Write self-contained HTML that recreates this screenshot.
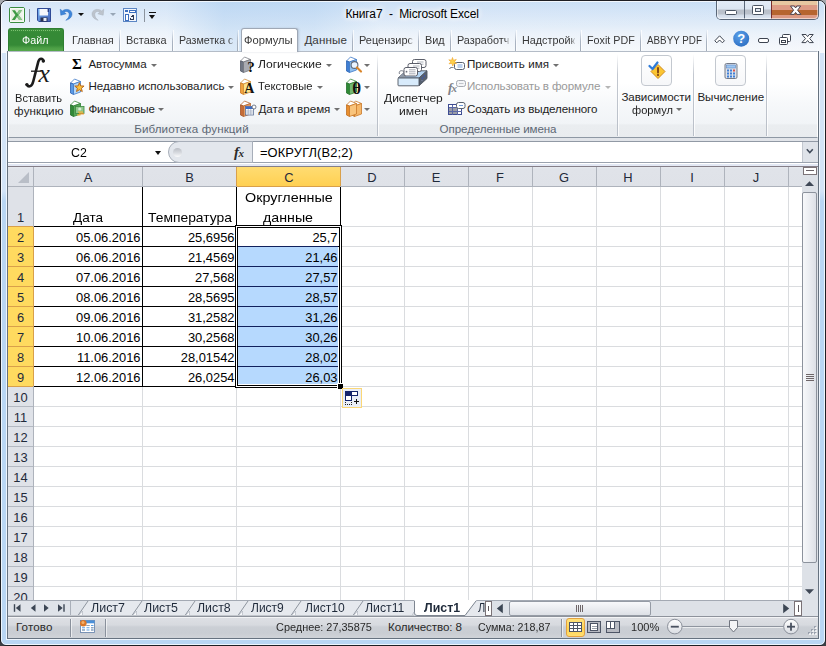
<!DOCTYPE html>
<html><head><meta charset="utf-8"><title>Excel</title>
<style>
html,body{margin:0;padding:0;}
body{width:826px;height:646px;overflow:hidden;background:linear-gradient(#a6a9ae,#3c3e43);font-family:"Liberation Sans",sans-serif;position:relative;}
.t{position:absolute;height:16px;line-height:16px;white-space:pre;font-family:"Liberation Sans",sans-serif;}
.a{position:absolute;}
#win{position:absolute;left:0;top:0;width:826px;height:646px;box-sizing:border-box;border:1px solid #1e1f24;border-radius:7px 7px 6px 6px;background:linear-gradient(#d3e4f7 0,#d3e4f7 190px,#b9d6f3 200px,#b9d6f3 100%);overflow:hidden;}
#glass{position:absolute;left:0;top:0;width:824px;height:52px;background:linear-gradient(90deg,rgba(255,255,255,.25) 0,rgba(255,255,255,.2) 20%,rgba(170,205,240,.35) 27%,rgba(170,205,240,.3) 38%,rgba(255,255,255,.1) 46%,rgba(255,255,255,.05) 100%),linear-gradient(#c6ddf5 0,#cfe2f6 8px,#d7e6f7 16px,#dfebf8 24px,#e9f1fa 32px,#f1f5fb 42px,#f6f9fc 52px);}
#glassline{position:absolute;left:0;top:0;width:824px;height:644px;box-sizing:border-box;border:1px solid rgba(255,255,255,.75);border-radius:6px 6px 5px 5px;}
.sep{position:absolute;width:1px;top:30px;height:21px;background:linear-gradient(rgba(150,165,185,0),#aab4c2 55%,#a3adbb);box-shadow:1px 0 0 rgba(255,255,255,.7);}
#ribbon{position:absolute;left:8px;top:51px;width:810px;height:87px;box-sizing:border-box;border:1px solid #fff;border-top-color:#b4bcc7;border-bottom:1px solid #8e98a4;background:linear-gradient(#ffffff 0,#ffffff 36%,#f6f8fa 62%,#f1f4f7 84%,#eaedf0 86%,#e9ecef 100%);}
.gsep{position:absolute;width:1px;top:54px;height:82px;background:linear-gradient(rgba(180,186,195,0),#c3c8d0 25%,#b9bfc8);box-shadow:1px 0 0 rgba(255,255,255,.8);}
.glabel{position:absolute;top:123px;height:13px;background:rgba(205,211,220,0);}
.arr{position:absolute;width:0;height:0;border-left:3px solid transparent;border-right:3px solid transparent;border-top:3px solid #707070;}
.bigbtn{position:absolute;width:31px;height:31px;box-sizing:border-box;border:1px solid #c3c8cf;border-radius:4px;background:linear-gradient(#fff,#f6f7f9);}

</style></head><body>
<div id="win">
<div id="glass"></div>
<div id="glassline"></div>
</div>
<!-- ===== window caption buttons ===== -->
<div class="a" style="left:716px;top:1px;width:103px;height:19px;box-sizing:border-box;border:1px solid #5a6778;border-top:none;border-radius:0 0 5px 5px;overflow:hidden;background:#dbe6f3">
  <div class="a" style="left:0;top:0;width:27px;height:19px;background:linear-gradient(#e3ecf7 0,#dbe5f1 8px,#b9c0ca 9px,#bcc3cd 13px,#d3dce8 14px,#dde6f2 18px)"></div>
  <div class="a" style="left:28px;top:0;width:26px;height:19px;background:linear-gradient(#e3ecf7 0,#dbe5f1 8px,#b9c0ca 9px,#bcc3cd 13px,#d3dce8 14px,#dde6f2 18px)"></div>
  <div class="a" style="left:27px;top:0;width:1px;height:19px;background:#5a6778"></div>
  <div class="a" style="left:54px;top:0;width:1px;height:19px;background:#7a2e2a"></div>
  <div class="a" style="left:55px;top:0;width:47px;height:19px;background:linear-gradient(#e7c7a1 0,#e7c7a1 4px,#dd9b85 4px,#dd9b85 9px,#b6652f 9px,#b6652f 14px,#dc9a84 14px,#dc9a84 18px)"></div>
  <div class="a" style="left:0;top:0;width:101px;height:18px;box-sizing:border-box;border:1px solid rgba(255,255,255,.55);border-top:none;border-radius:0 0 4px 4px"></div>
</div>
<svg class="a" style="left:716px;top:0" width="103" height="20">
  <rect x="9.5" y="10.5" width="11" height="4" rx="1" fill="#fff" stroke="#4b5563"/>
  <rect x="36.500" y="5.500" width="11" height="9" rx="1" fill="#fff" stroke="#4b5563"/>
  <rect x="39.5" y="8.5" width="5" height="3" fill="#dfe6ef" stroke="#4b5563"/>
  <path d="M74.500 6 L78.300 6 L79.600 8 L80.900 6 L84.700 6 L81.600 10.200 L84.900 14.400 L81 14.400 L79.600 12.400 L78.200 14.400 L74.300 14.400 L77.600 10.200 Z" fill="#fff" stroke="#4d4550" stroke-width="1" stroke-linejoin="round"/>
</svg>
<!-- ===== quick access toolbar ===== -->
<svg class="a" style="left:9px;top:7px" width="16" height="16">
  <rect x="0.500" y="0.500" width="15" height="15" rx="1.500" fill="#e9f0e3" stroke="#3a8d3f"/>
  <rect x="1.500" y="1.500" width="13" height="13" fill="none" stroke="#f7faf4"/>
  <path d="M3 3.200 L6 3.200 L8 6.300 L10 3.200 L13 3.200 L9.600 8 L13.200 12.900 L10.100 12.900 L8 9.800 L5.900 12.900 L2.800 12.900 L6.400 8 Z" fill="#3f9a45"/>
  <path d="M10 3.200 L13 3.200 L9.600 8 L8 6.300 Z M8 9.800 L9.600 8 L13.200 12.900 L10.100 12.900 Z" fill="#8cc68a"/>
  <path d="M11 7 L14 4.500 V11.500 Z" fill="#f4f8f1" opacity=".8"/>
</svg>
<div class="a" style="left:29px;top:9px;width:1px;height:13px;background:#8b939d"></div>
<svg class="a" style="left:37px;top:8px" width="14" height="14">
  <defs><linearGradient id="sv" x1="0" y1="0" x2="1" y2="1"><stop offset="0" stop-color="#78b8f6"/><stop offset="1" stop-color="#4560b4"/></linearGradient></defs>
  <path d="M0.500 0.500 H13.500 V13.500 H1.800 L0.500 12.200 Z" fill="url(#sv)" stroke="#2f4a96"/>
  <rect x="2.500" y="1" width="8.500" height="6.500" fill="#f6f8fb"/>
  <rect x="10.600" y="1" width="1.400" height="3" fill="#2d3f86"/>
  <rect x="3.500" y="9.500" width="7" height="4" fill="#2a3350"/>
  <rect x="6.500" y="10" width="3" height="3" fill="#e9edf5"/>
</svg>
<svg class="a" style="left:59px;top:7px" width="15" height="15">
  <path d="M1.200 2.200 L1.800 8.200 L7.200 6.800 L5 5.300 C7.200 3.600 10.200 4.600 10.200 7.600 C10.200 9.900 8.900 11.600 6.800 13.300 C10.600 12.300 13 10 13 7 C13 2.600 7.200 0.900 3.400 3.900 Z" fill="#3f86d9" stroke="#2f6fc0" stroke-width=".5"/>
</svg>
<div class="a" style="left:78px;top:13px;width:0;height:0;border-left:3px solid transparent;border-right:3px solid transparent;border-top:3px solid #111"></div>
<svg class="a" style="left:90px;top:8px" width="15" height="15">
  <path d="M13.800 1.200 L13.200 7.200 L7.800 5.800 L10 4.300 C7.800 2.600 4.800 3.600 4.800 6.600 C4.800 8.900 6.100 10.600 8.200 12.300 C4.400 11.300 2 9 2 6 C2 1.600 7.800 -0.100 11.600 2.900 Z" fill="#bcc3cc" stroke="#aab2bd" stroke-width=".5"/>
</svg>
<div class="a" style="left:110px;top:13px;width:0;height:0;border-left:3px solid transparent;border-right:3px solid transparent;border-top:3px solid #98a6b6"></div>
<svg class="a" style="left:123px;top:8px" width="14" height="14" shape-rendering="crispEdges">
  <rect x="0.500" y="0.500" width="13" height="13" fill="#f3f6fb" stroke="#5b86c4"/>
  <rect x="2" y="2" width="3" height="2" fill="#3c6fc0"/><rect x="6" y="2" width="6" height="2" fill="#fff" stroke="#3c6fc0" stroke-width="1"/>
  <rect x="2" y="6" width="3" height="6" fill="#fff" stroke="#3c6fc0" stroke-width="1"/>
  <path d="M7 11 H10 V7" fill="none" stroke="#2f3c58" stroke-width="1"/><path d="M8.500 8.500 L10 6 L11.500 8.500 Z M8 9.500 L6 11 L8 12.500Z" fill="#2f3c58"/>
</svg>
<div class="a" style="left:144px;top:9px;width:1px;height:13px;background:#8b939d"></div>
<div class="a" style="left:149px;top:12px;width:7px;height:1px;background:#111"></div>
<div class="a" style="left:149px;top:15px;width:0;height:0;border-left:3.500px solid transparent;border-right:3.500px solid transparent;border-top:4px solid #111"></div>

<!-- ===== tab row ===== -->
<div class="a" style="left:8px;top:28px;width:56px;height:23px;background:linear-gradient(#3c903c 0,#358a36 4px,#358a36 16px,#4c9f45 19px,#5aaa4e 23px);border:1px solid #2f7f31;border-bottom:none;box-sizing:border-box;border-radius:3px 3px 0 0"></div><div class="a" style="left:11px;top:30px;width:50px;height:1px;background:repeating-linear-gradient(90deg,#7cc070 0,#7cc070 1px,rgba(0,0,0,0) 1px,rgba(0,0,0,0) 2px)"></div>
<div class="sep" style="left:119px"></div><div class="sep" style="left:172px"></div><div class="sep" style="left:237px"></div>
<div class="sep" style="left:352px"></div><div class="sep" style="left:418px"></div><div class="sep" style="left:450px"></div>
<div class="sep" style="left:515px"></div><div class="sep" style="left:580px"></div><div class="sep" style="left:640px"></div><div class="sep" style="left:706px"></div>
<div id="ribbon"></div>
<!-- active tab -->
<div class="a" style="left:241px;top:28px;width:57px;height:24px;box-sizing:border-box;border:1px solid #9fa8b5;border-bottom:none;border-radius:3px 3px 0 0;background:#fff;box-shadow:1px 0 2px rgba(120,135,155,.35)"></div>
<!-- ribbon right-side controls -->
<svg class="a" style="left:712px;top:30px" width="106" height="20">
  <path d="M2.800 10.800 L7.600 5.800 L12.400 10.800 L10.400 12.800 L7.600 10 L4.800 12.800 Z" fill="#fff" stroke="#3d4450" stroke-width="1" stroke-linejoin="round"/>
  <defs><radialGradient id="hp" cx=".4" cy=".3" r=".8"><stop offset="0" stop-color="#5aa0ea"/><stop offset="1" stop-color="#2b6cc0"/></radialGradient></defs>
  <circle cx="29.200" cy="8.700" r="8" fill="url(#hp)"/>
  <text x="29.300" y="13.300" font-family="Liberation Sans" font-weight="bold" font-size="13" fill="#fff" text-anchor="middle">?</text>
  <rect x="46.500" y="8.500" width="10" height="4" rx="1.500" fill="#fff" stroke="#3d4450"/>
  <rect x="70.500" y="4.500" width="8" height="7" rx="1" fill="#fff" stroke="#3d4450"/>
  <rect x="67.500" y="7.500" width="8" height="7" rx="1" fill="#fff" stroke="#3d4450"/>
  <rect x="69.500" y="10.500" width="4" height="2" fill="#fff" stroke="#3d4450"/>
  <path d="M90 4.500 L94 4.500 L95.600 6.600 L97.200 4.500 L101.200 4.500 L97.700 8.600 L101.300 12.600 L97.300 12.600 L95.600 10.500 L93.900 12.600 L89.900 12.600 L93.500 8.600 Z" fill="#fff" stroke="#3d4450" stroke-width="1" stroke-linejoin="round"/>
</svg>
<!-- group label bands -->
<div class="glabel" style="left:10px;width:366px"></div><div class="glabel" style="left:379px;width:238px"></div><div class="glabel" style="left:620px;width:72px"></div><div class="glabel" style="left:695px;width:70px"></div><div class="glabel" style="left:768px;width:48px"></div>
<div class="gsep" style="left:377px"></div><div class="gsep" style="left:617px"></div><div class="gsep" style="left:693px"></div><div class="gsep" style="left:766px"></div>
<div class="bigbtn" style="left:641px;top:55px"></div><div class="bigbtn" style="left:715px;top:55px"></div>
<!-- big fx -->
<svg class="a" style="left:22px;top:54px" width="30" height="36">
  <path d="M21.400 7 C21 4.300 17.600 3.400 16.300 7.600 L11.300 27.300 C10 32.700 6.600 33.700 4.900 30.800" fill="none" stroke="#1c1c1c" stroke-width="2.600" stroke-linecap="round"/>
  <circle cx="21.300" cy="7" r="1.700" fill="#1c1c1c"/><circle cx="4.900" cy="30.600" r="1.700" fill="#1c1c1c"/>
  <path d="M9 17.200 H19.500" stroke="#1c1c1c" stroke-width="1.300"/>
</svg>
<div class="t" style="left:38.400px;top:54px;height:40px;line-height:40px;font-family:'Liberation Serif';font-style:italic;font-size:25.500px;color:#1c1c1c;">x</div>
<!-- sigma -->
<div class="t" style="left:72px;top:56px;font-family:'Liberation Serif';font-weight:bold;font-size:15px;color:#000">Σ</div>
<!-- recently used: blue book + star -->
<svg class="a" style="left:69px;top:78px" width="18" height="18">
  <path d="M1.500 5 L5.500 1 L11.500 3.500 L4.500 6 Z" fill="#fff" stroke="#3d78c8" stroke-width=".8"/>
  <path d="M1.500 5 L4.500 6 L4.500 16.500 L1.500 15 Z" fill="#5b9be6" stroke="#2f5fb0" stroke-width=".8"/>
  <path d="M4.500 6 L11.500 3.500 L11.500 14 L4.500 16.500 Z" fill="#b5d8f8" stroke="#3d78c8" stroke-width=".8"/>
  <path d="M10.40 4.70 L11.63 7.90 L15.06 8.09 L12.40 10.25 L13.28 13.56 L10.40 11.70 L7.52 13.56 L8.40 10.25 L5.74 8.09 L9.17 7.90 Z" fill="#fbc23c" stroke="#b9691c" stroke-width="1"/>
</svg>
<!-- financial: green book + coins -->
<svg class="a" style="left:69px;top:100px" width="18" height="18">
  <path d="M1.500 5 L5.500 1 L11.500 3.500 L4.500 6 Z" fill="#fff" stroke="#3b8a3f" stroke-width=".8"/>
  <path d="M1.500 5 L4.500 6 L4.500 16.500 L1.500 15 Z" fill="#2f8a36" stroke="#256f2b" stroke-width=".8"/>
  <path d="M4.500 6 L11.500 3.500 L11.500 14 L4.500 16.500 Z" fill="#58a85a" stroke="#2f7f35" stroke-width=".8"/>
  <rect x="6.500" y="6.500" width="8.500" height="7" fill="#8fc68c" stroke="#3b8a3f" stroke-width=".8"/>
  <circle cx="10.800" cy="9" r="1.600" fill="#d9ecd3"/>
  <rect x="9" y="11.500" width="5" height="1.200" fill="#f4b63a"/><rect x="10" y="13.200" width="5" height="1.200" fill="#e9952a"/><rect x="8" y="14.300" width="3.500" height="1.200" fill="#f4b63a"/>
</svg>
<!-- logical: grey book + ? -->
<svg class="a" style="left:239px;top:56px" width="18" height="18">
  <path d="M1.500 5 L5.500 1 L11.500 3.500 L4.500 6 Z" fill="#fff" stroke="#7d8088" stroke-width=".8"/>
  <path d="M1.500 5 L4.500 6 L4.500 16.500 L1.500 15 Z" fill="#6f7684" stroke="#555b68" stroke-width=".8"/>
  <path d="M4.500 6 L11.500 3.500 L11.500 14 L4.500 16.500 Z" fill="#a9abb2" stroke="#73767e" stroke-width=".8"/>
  <text x="12" y="15.800" font-family="Liberation Serif" font-weight="bold" font-size="15" text-anchor="middle" fill="#111">?</text>
</svg>
<!-- text: yellow book + A -->
<svg class="a" style="left:239px;top:78px" width="18" height="18">
  <path d="M1.500 5 L5.500 1 L11.500 3.500 L4.500 6 Z" fill="#fff" stroke="#cf8a35" stroke-width=".8"/>
  <path d="M1.500 5 L4.500 6 L4.500 16.500 L1.500 15 Z" fill="#f0a23c" stroke="#c9792a" stroke-width=".8"/>
  <path d="M4.500 6 L11.500 3.500 L11.500 14 L4.500 16.500 Z" fill="#fde28a" stroke="#d08c36" stroke-width=".8"/>
  <text x="10.200" y="15.400" font-family="Liberation Serif" font-weight="bold" font-size="14" text-anchor="middle" fill="#111">A</text>
</svg>
<!-- date: orange book + calendar -->
<svg class="a" style="left:239px;top:100px" width="18" height="18">
  <path d="M1.500 5 L5.500 1 L11.500 3.500 L4.500 6 Z" fill="#fff" stroke="#b86a35" stroke-width=".8"/>
  <path d="M1.500 5 L4.500 6 L4.500 16.500 L1.500 15 Z" fill="#c86c36" stroke="#a3552a" stroke-width=".8"/>
  <path d="M4.500 6 L11.500 3.500 L11.500 14 L4.500 16.500 Z" fill="#e49a63" stroke="#b86a35" stroke-width=".8"/>
  <rect x="6.500" y="6.500" width="8" height="8.500" fill="#fff" stroke="#5b6f95" stroke-width=".8"/>
  <rect x="6.500" y="6.500" width="8" height="2.500" fill="#3c6cc4"/>
  <path d="M6.500 11 H14.500 M6.500 13 H14.500 M9.200 9 V15 M11.800 9 V15" stroke="#9aa6bd" stroke-width=".7"/>
  <circle cx="15" cy="7" r="2" fill="#fff" stroke="#555e70" stroke-width=".8"/>
</svg>
<!-- lookup: blue book + magnifier -->
<svg class="a" style="left:345px;top:56px" width="18" height="18">
  <path d="M1.500 5 L5.500 1 L11.500 3.500 L4.500 6 Z" fill="#fff" stroke="#3d78c8" stroke-width=".8"/>
  <path d="M1.500 5 L4.500 6 L4.500 16.500 L1.500 15 Z" fill="#3f7fd4" stroke="#2f66b4" stroke-width=".8"/>
  <path d="M4.500 6 L11.500 3.500 L11.500 14 L4.500 16.500 Z" fill="#8fc0f0" stroke="#3d78c8" stroke-width=".8"/>
  <circle cx="9.500" cy="9" r="3.400" fill="#eaf4ff" stroke="#5f6b7d" stroke-width="1.100"/>
  <path d="M12 11.500 L16 15.500" stroke="#d9862b" stroke-width="2.200" stroke-linecap="round"/>
</svg>
<!-- math: green book + theta -->
<svg class="a" style="left:345px;top:78px" width="18" height="18">
  <path d="M1.500 5 L5.500 1 L11.500 3.500 L4.500 6 Z" fill="#fff" stroke="#3b8a3f" stroke-width=".8"/>
  <path d="M1.500 5 L4.500 6 L4.500 16.500 L1.500 15 Z" fill="#2f8a36" stroke="#256f2b" stroke-width=".8"/>
  <path d="M4.500 6 L11.500 3.500 L11.500 14 L4.500 16.500 Z" fill="#74b874" stroke="#2f7f35" stroke-width=".8"/>
  <text x="11.800" y="15.800" font-family="Liberation Serif" font-weight="bold" font-size="17" text-anchor="middle" fill="#111">θ</text>
</svg>
<!-- more: two orange books -->
<svg class="a" style="left:345px;top:100px" width="19" height="18">
  <g transform="translate(5,0)"><path d="M1.500 5 L5.500 1 L11.500 3.500 L4.500 6 Z" fill="#fff" stroke="#c9792a" stroke-width=".8"/>
  <path d="M1.500 5 L4.500 6 L4.500 16.500 L1.500 15 Z" fill="#e98f2f" stroke="#bf6f22" stroke-width=".8"/>
  <path d="M4.500 6 L11.500 3.500 L11.500 14 L4.500 16.500 Z" fill="#f6b86a" stroke="#c9792a" stroke-width=".8"/></g>
  <g><path d="M1.500 5 L5.500 1 L11.500 3.500 L4.500 6 Z" fill="#fff" stroke="#c9792a" stroke-width=".8"/>
  <path d="M1.500 5 L4.500 6 L4.500 16.500 L1.500 15 Z" fill="#e98f2f" stroke="#bf6f22" stroke-width=".8"/>
  <path d="M4.500 6 L11.500 3.500 L11.500 14 L4.500 16.500 Z" fill="#f9c47c" stroke="#c9792a" stroke-width=".8"/></g>
</svg>
<!-- name manager -->
<svg class="a" style="left:396px;top:57px" width="34" height="32">
  <path d="M10 13.800 L31 13.800 L23 21 L2 21 Z" fill="#b4d4f2" stroke="#4f5560" stroke-width=".9"/>
  <path d="M10 13.800 L13 13.800 L9 21 L2 21 Z" fill="#8e98a6"/>
  <rect x="16.500" y="2.500" width="13.500" height="8" rx="2" fill="#fff" stroke="#5c5f6a"/>
  <path d="M21 5 H27.500 M21 7.200 H27.500" stroke="#a4a9b3" stroke-width=".9"/>
  <rect x="12" y="6.500" width="13.500" height="8" rx="2" fill="#fff" stroke="#5c5f6a"/>
  <path d="M17 9 H23.500 M17 11.200 H23.500" stroke="#a4a9b3" stroke-width=".9"/>
  <rect x="8" y="10.500" width="13.500" height="8.500" rx="2" fill="#fff" stroke="#5c5f6a"/>
  <path d="M13 12.800 H19.500 M13 14.800 H19.500 M13 16.800 H19.500" stroke="#9da2ad" stroke-width=".9"/>
  <circle cx="10.500" cy="14.700" r=".9" fill="#6a6e7a"/>
  <path d="M8 14.500 C4.500 12.500 2.500 14.500 3.500 17" fill="none" stroke="#6a6e7a" stroke-width=".9"/>
  <path d="M23 21 L31 13.800 L31 21.500 L23 28.800 Z" fill="#556070" stroke="#4f5560" stroke-width=".9"/>
  <circle cx="26.500" cy="21" r=".7" fill="#3a4fc0"/><circle cx="28.500" cy="19" r=".7" fill="#3a4fc0"/><circle cx="26" cy="23.500" r=".6" fill="#8a8fb0"/>
  <rect x="2" y="21" width="21" height="7.800" rx=".8" fill="#d8ebfb" stroke="#4f5560" stroke-width=".9"/>
</svg>
<!-- define name -->
<svg class="a" style="left:448px;top:57px" width="18" height="16">
  <path d="M1.500 12 C2 10 4 10.500 5.500 10.500" fill="none" stroke="#59616f" stroke-width=".9"/>
  <rect x="6.500" y="5.500" width="10" height="7" rx="2" fill="#fff" stroke="#59616f"/>
  <path d="M9.500 8 H14.500 M9.500 10 H14.500" stroke="#6d9ad8" stroke-width=".9"/>
  <path d="M4.500 0.500 L5.400 3.300 L8.300 2.400 L6.500 4.700 L8.500 6.500 L5.700 6.400 L4.800 9 L3.800 6.400 L1 6.800 L2.800 4.800 L0.800 2.800 L3.600 3.200 Z" fill="#fdd24c" stroke="#f0a326" stroke-width=".6"/>
</svg>
<!-- use in formula (disabled) -->
<div class="t" style="left:448px;top:80px;font-family:'Liberation Serif';font-style:italic;font-weight:bold;font-size:13.500px;color:#808389;letter-spacing:-1px">f<span style="font-size:11px">x</span></div>
<svg class="a" style="left:455px;top:80px" width="11" height="8"><rect x="1.500" y="0.500" width="9" height="6" rx="2" fill="#f4f5f7" stroke="#a5a9b0"/><path d="M4 3.500 H8.500" stroke="#c2c5cb"/></svg>
<!-- create from selection -->
<svg class="a" style="left:447px;top:102px" width="19" height="14" shape-rendering="crispEdges">
  <rect x="1.500" y="2.500" width="13" height="10" fill="#fff" stroke="#3d4c92"/>
  <rect x="2" y="6" width="8" height="6" fill="#9a9da6"/>
  <path d="M1.500 5.500 H14.500 M1.500 9.500 H14.500 M5.500 2.500 V12.500 M10.500 2.500 V12.500" stroke="#5a68a6" fill="none"/>
  <g shape-rendering="auto"><rect x="9.500" y="0.500" width="8.500" height="6" rx="2" fill="#fff" stroke="#59616f"/><path d="M12 3.500 H16" stroke="#6d9ad8"/></g>
</svg>
<!-- formula auditing: diamond + check -->
<svg class="a" style="left:647px;top:61px" width="20" height="20">
  <path d="M11 3.500 L18 10.500 L11 17.500 L4 10.500 Z" fill="#fbc531" stroke="#d08a1d" stroke-width="1"/>
  <path d="M11 7 V11.500" stroke="#7a3b12" stroke-width="1.800" stroke-linecap="round"/><circle cx="11" cy="14" r="1.100" fill="#7a3b12"/>
  <path d="M2.500 5 L5.500 8 L10.500 1.500" fill="none" stroke="#2f7bd8" stroke-width="2.200" stroke-linecap="round" stroke-linejoin="round"/>
</svg>
<!-- calculator -->
<svg class="a" style="left:724px;top:62px" width="14" height="18">
  <rect x="1" y="1.500" width="12" height="15" rx="1.500" fill="#dfe3ea" stroke="#737b8a"/>
  <rect x="2.500" y="3" width="9" height="3" fill="#9cc6f2" stroke="#5f86c2" stroke-width=".6"/>
  <g fill="#3f7fd6"><rect x="3" y="7.500" width="2" height="2"/><rect x="6" y="7.500" width="2" height="2"/><rect x="3" y="10.500" width="2" height="2"/><rect x="6" y="10.500" width="2" height="2"/><rect x="3" y="13.500" width="2" height="2"/><rect x="6" y="13.500" width="2" height="2"/><rect x="9" y="10.500" width="2" height="2"/><rect x="9" y="13.500" width="2" height="2"/></g>
  <rect x="9" y="7.500" width="2" height="2" fill="#d9534a"/>
</svg>

<!-- dropdown arrows -->
<div class="arr" style="left:151px;top:64px"></div><div class="arr" style="left:228px;top:86px"></div><div class="arr" style="left:158px;top:108px"></div>
<div class="arr" style="left:326px;top:64px"></div><div class="arr" style="left:317px;top:86px"></div><div class="arr" style="left:334px;top:108px"></div>
<div class="arr" style="left:364px;top:64px"></div><div class="arr" style="left:364px;top:86px"></div><div class="arr" style="left:364px;top:108px"></div>
<div class="arr" style="left:553px;top:64px"></div><div class="arr" style="left:605px;top:86px;border-top-color:#b5b5b5"></div>
<div class="arr" style="left:676px;top:108px"></div><div class="arr" style="left:728px;top:108px"></div>
<!-- ===== formula bar ===== -->
<div class="a" style="left:8px;top:138px;width:810px;height:28px;background:#e1e4e9"></div>
<div class="a" style="left:8px;top:141px;width:810px;height:22px;box-sizing:border-box;border-top:1px solid #9199a5;border-bottom:1px solid #9aa2ae;background:#fff"></div>
<div class="a" style="left:8px;top:163px;width:810px;height:1px;background:#fff"></div><div class="a" style="left:8px;top:164px;width:810px;height:2px;background:#e3e8f4"></div>
<div class="a" style="left:168px;top:141px;width:85px;height:22px;box-sizing:border-box;border:1px solid #a7aeb9;border-radius:11px 0 0 11px;background:#e3e7ed"></div>
<div class="a" style="left:173px;top:148px;width:9px;height:9px;border-radius:5px;background:linear-gradient(#b9bdc4,#d9dce1 55%,#fafbfc)"></div>
<div class="a" style="left:155px;top:151px;width:0;height:0;border-left:3.500px solid transparent;border-right:3.500px solid transparent;border-top:4px solid #111"></div>
<div class="t" style="left:234px;top:144px;font-family:'Liberation Serif';font-style:italic;font-weight:bold;font-size:15px;color:#2b2b2b;letter-spacing:-0.500px">f<span style="font-size:11px">x</span></div>
<div class="a" style="left:802px;top:142px;width:16px;height:20px;background:#dfe3e9;border-left:1px solid #c2c7cf;box-sizing:border-box"></div>
<svg class="a" style="left:802px;top:142px" width="16" height="20"><path d="M4.800 7.300 L7.800 10.500 L10.800 7.300" fill="none" stroke="#414b5a" stroke-width="1.600"/></svg>
<div id="grid" style="position:absolute;left:0;top:0;width:826px;height:600px;overflow:hidden"><div style="position:absolute;left:8px;top:166px;width:794px;height:434px;background:#fff;"></div>
<div style="position:absolute;left:8px;top:166px;width:794px;height:1px;background:#857f88;"></div>
<div style="position:absolute;left:8px;top:167px;width:794px;height:19px;background:linear-gradient(#e6e9ee 0,#e0e3e9 2px,#dfe2e8 100%);"></div>
<div style="position:absolute;left:8px;top:187px;width:25px;height:413px;background:#dfe2e8;"></div>
<div style="position:absolute;left:237px;top:167px;width:103px;height:19px;background:linear-gradient(#ffdc72,#ffd052);"></div>
<div style="position:absolute;left:8px;top:227px;width:25px;height:159px;background:#ffda5f;"></div>
<div style="position:absolute;left:142px;top:187px;width:1px;height:413px;background:#dadcdf;"></div>
<div style="position:absolute;left:236px;top:187px;width:1px;height:413px;background:#dadcdf;"></div>
<div style="position:absolute;left:340px;top:187px;width:1px;height:413px;background:#dadcdf;"></div>
<div style="position:absolute;left:404px;top:187px;width:1px;height:413px;background:#dadcdf;"></div>
<div style="position:absolute;left:468px;top:187px;width:1px;height:413px;background:#dadcdf;"></div>
<div style="position:absolute;left:532px;top:187px;width:1px;height:413px;background:#dadcdf;"></div>
<div style="position:absolute;left:596px;top:187px;width:1px;height:413px;background:#dadcdf;"></div>
<div style="position:absolute;left:660px;top:187px;width:1px;height:413px;background:#dadcdf;"></div>
<div style="position:absolute;left:724px;top:187px;width:1px;height:413px;background:#dadcdf;"></div>
<div style="position:absolute;left:788px;top:187px;width:1px;height:413px;background:#dadcdf;"></div>
<div style="position:absolute;left:34px;top:226px;width:768px;height:1px;background:#dadcdf;"></div>
<div style="position:absolute;left:34px;top:246px;width:768px;height:1px;background:#dadcdf;"></div>
<div style="position:absolute;left:34px;top:266px;width:768px;height:1px;background:#dadcdf;"></div>
<div style="position:absolute;left:34px;top:286px;width:768px;height:1px;background:#dadcdf;"></div>
<div style="position:absolute;left:34px;top:306px;width:768px;height:1px;background:#dadcdf;"></div>
<div style="position:absolute;left:34px;top:326px;width:768px;height:1px;background:#dadcdf;"></div>
<div style="position:absolute;left:34px;top:346px;width:768px;height:1px;background:#dadcdf;"></div>
<div style="position:absolute;left:34px;top:366px;width:768px;height:1px;background:#dadcdf;"></div>
<div style="position:absolute;left:34px;top:386px;width:768px;height:1px;background:#dadcdf;"></div>
<div style="position:absolute;left:34px;top:406px;width:768px;height:1px;background:#dadcdf;"></div>
<div style="position:absolute;left:34px;top:426px;width:768px;height:1px;background:#dadcdf;"></div>
<div style="position:absolute;left:34px;top:446px;width:768px;height:1px;background:#dadcdf;"></div>
<div style="position:absolute;left:34px;top:466px;width:768px;height:1px;background:#dadcdf;"></div>
<div style="position:absolute;left:34px;top:486px;width:768px;height:1px;background:#dadcdf;"></div>
<div style="position:absolute;left:34px;top:506px;width:768px;height:1px;background:#dadcdf;"></div>
<div style="position:absolute;left:34px;top:526px;width:768px;height:1px;background:#dadcdf;"></div>
<div style="position:absolute;left:34px;top:546px;width:768px;height:1px;background:#dadcdf;"></div>
<div style="position:absolute;left:34px;top:566px;width:768px;height:1px;background:#dadcdf;"></div>
<div style="position:absolute;left:34px;top:586px;width:768px;height:1px;background:#dadcdf;"></div>
<div style="position:absolute;left:8px;top:186px;width:794px;height:1px;background:#aeb3bc;"></div>
<div style="position:absolute;left:33px;top:167px;width:1px;height:433px;background:#aeb3bc;"></div>
<div style="position:absolute;left:142px;top:167px;width:1px;height:19px;background:#aeb3bc;"></div>
<div style="position:absolute;left:236px;top:167px;width:1px;height:19px;background:#aeb3bc;"></div>
<div style="position:absolute;left:340px;top:167px;width:1px;height:19px;background:#aeb3bc;"></div>
<div style="position:absolute;left:404px;top:167px;width:1px;height:19px;background:#aeb3bc;"></div>
<div style="position:absolute;left:468px;top:167px;width:1px;height:19px;background:#aeb3bc;"></div>
<div style="position:absolute;left:532px;top:167px;width:1px;height:19px;background:#aeb3bc;"></div>
<div style="position:absolute;left:596px;top:167px;width:1px;height:19px;background:#aeb3bc;"></div>
<div style="position:absolute;left:660px;top:167px;width:1px;height:19px;background:#aeb3bc;"></div>
<div style="position:absolute;left:724px;top:167px;width:1px;height:19px;background:#aeb3bc;"></div>
<div style="position:absolute;left:788px;top:167px;width:1px;height:19px;background:#aeb3bc;"></div>
<div style="position:absolute;left:8px;top:226px;width:25px;height:1px;background:#b4b9c2;"></div>
<div style="position:absolute;left:8px;top:246px;width:25px;height:1px;background:#b4b9c2;"></div>
<div style="position:absolute;left:8px;top:266px;width:25px;height:1px;background:#b4b9c2;"></div>
<div style="position:absolute;left:8px;top:286px;width:25px;height:1px;background:#b4b9c2;"></div>
<div style="position:absolute;left:8px;top:306px;width:25px;height:1px;background:#b4b9c2;"></div>
<div style="position:absolute;left:8px;top:326px;width:25px;height:1px;background:#b4b9c2;"></div>
<div style="position:absolute;left:8px;top:346px;width:25px;height:1px;background:#b4b9c2;"></div>
<div style="position:absolute;left:8px;top:366px;width:25px;height:1px;background:#b4b9c2;"></div>
<div style="position:absolute;left:8px;top:386px;width:25px;height:1px;background:#b4b9c2;"></div>
<div style="position:absolute;left:8px;top:406px;width:25px;height:1px;background:#b4b9c2;"></div>
<div style="position:absolute;left:8px;top:426px;width:25px;height:1px;background:#b4b9c2;"></div>
<div style="position:absolute;left:8px;top:446px;width:25px;height:1px;background:#b4b9c2;"></div>
<div style="position:absolute;left:8px;top:466px;width:25px;height:1px;background:#b4b9c2;"></div>
<div style="position:absolute;left:8px;top:486px;width:25px;height:1px;background:#b4b9c2;"></div>
<div style="position:absolute;left:8px;top:506px;width:25px;height:1px;background:#b4b9c2;"></div>
<div style="position:absolute;left:8px;top:526px;width:25px;height:1px;background:#b4b9c2;"></div>
<div style="position:absolute;left:8px;top:546px;width:25px;height:1px;background:#b4b9c2;"></div>
<div style="position:absolute;left:8px;top:566px;width:25px;height:1px;background:#b4b9c2;"></div>
<div style="position:absolute;left:8px;top:586px;width:25px;height:1px;background:#b4b9c2;"></div>
<div style="position:absolute;left:236px;top:167px;width:1px;height:19px;background:#d9a04a;"></div>
<div style="position:absolute;left:340px;top:167px;width:1px;height:19px;background:#d9a04a;"></div>
<div style="position:absolute;left:237px;top:186px;width:103px;height:1px;background:#d9a04a;"></div>
<div style="position:absolute;left:8px;top:226px;width:25px;height:1px;background:#d9a04a;"></div>
<div style="position:absolute;left:8px;top:246px;width:25px;height:1px;background:#d9a04a;"></div>
<div style="position:absolute;left:8px;top:266px;width:25px;height:1px;background:#d9a04a;"></div>
<div style="position:absolute;left:8px;top:286px;width:25px;height:1px;background:#d9a04a;"></div>
<div style="position:absolute;left:8px;top:306px;width:25px;height:1px;background:#d9a04a;"></div>
<div style="position:absolute;left:8px;top:326px;width:25px;height:1px;background:#d9a04a;"></div>
<div style="position:absolute;left:8px;top:346px;width:25px;height:1px;background:#d9a04a;"></div>
<div style="position:absolute;left:8px;top:366px;width:25px;height:1px;background:#d9a04a;"></div>
<div style="position:absolute;left:8px;top:386px;width:25px;height:1px;background:#d9a04a;"></div>
<div style="position:absolute;left:33px;top:227px;width:1px;height:159px;background:#d9a04a;"></div>
<svg style="position:absolute;left:16px;top:172px" width="14" height="12"><path d="M13 0 L13 11 L2 11 Z" fill="#b9bec7"/></svg>
<div style="position:absolute;left:238px;top:247px;width:100px;height:137px;background:#b6d9fe;"></div>
<div style="position:absolute;left:142px;top:187px;width:1px;height:200px;background:#000;"></div>
<div style="position:absolute;left:236px;top:187px;width:1px;height:200px;background:#000;"></div>
<div style="position:absolute;left:340px;top:187px;width:1px;height:200px;background:#000;"></div>
<div style="position:absolute;left:33px;top:187px;width:1px;height:0px;background:#000;"></div>
<div style="position:absolute;left:34px;top:226px;width:307px;height:1px;background:#000;"></div>
<div style="position:absolute;left:34px;top:246px;width:307px;height:1px;background:#000;"></div>
<div style="position:absolute;left:34px;top:266px;width:307px;height:1px;background:#000;"></div>
<div style="position:absolute;left:34px;top:286px;width:307px;height:1px;background:#000;"></div>
<div style="position:absolute;left:34px;top:306px;width:307px;height:1px;background:#000;"></div>
<div style="position:absolute;left:34px;top:326px;width:307px;height:1px;background:#000;"></div>
<div style="position:absolute;left:34px;top:346px;width:307px;height:1px;background:#000;"></div>
<div style="position:absolute;left:34px;top:366px;width:307px;height:1px;background:#000;"></div>
<div style="position:absolute;left:34px;top:386px;width:307px;height:1px;background:#000;"></div>
<div style="position:absolute;left:238px;top:246px;width:100px;height:1px;background:#10205c;"></div>
<div style="position:absolute;left:238px;top:266px;width:100px;height:1px;background:#10205c;"></div>
<div style="position:absolute;left:238px;top:286px;width:100px;height:1px;background:#10205c;"></div>
<div style="position:absolute;left:238px;top:306px;width:100px;height:1px;background:#10205c;"></div>
<div style="position:absolute;left:238px;top:326px;width:100px;height:1px;background:#10205c;"></div>
<div style="position:absolute;left:238px;top:346px;width:100px;height:1px;background:#10205c;"></div>
<div style="position:absolute;left:238px;top:366px;width:100px;height:1px;background:#10205c;"></div>
<div style="position:absolute;left:238px;top:386px;width:100px;height:1px;background:#10205c;"></div>
<div style="position:absolute;left:235px;top:225px;width:107px;height:163px;box-sizing:border-box;border:1px solid #000"></div>
<div style="position:absolute;left:236px;top:226px;width:105px;height:161px;box-sizing:border-box;border:1px solid #fff"></div>
<div style="position:absolute;left:237px;top:227px;width:103px;height:159px;box-sizing:border-box;border:1px solid #000"></div>
<div style="position:absolute;left:238px;top:247px;width:101px;height:138px;box-sizing:border-box;border-right:1px solid #fff;border-bottom:1px solid #fff"></div>
<div style="position:absolute;left:337px;top:383px;width:6px;height:6px;background:#fff;"></div>
<div style="position:absolute;left:338px;top:384px;width:5px;height:5px;background:#000;"></div>
<div style="position:absolute;left:342px;top:388px;width:20px;height:20px;box-sizing:border-box;border:1px solid #fbd776;background:#e9eef7"></div>
<svg style="position:absolute;left:342px;top:388px" width="20" height="20" shape-rendering="crispEdges">
<rect x="3.5" y="3.5" width="12" height="4" fill="#fff" stroke="#14246b"/><rect x="3" y="3" width="7" height="5" fill="#14246b"/>
<rect x="3.5" y="7.5" width="6" height="5" fill="#fff" stroke="#14246b"/>
<rect x="3" y="14" width="1" height="1" fill="#222"/><rect x="9" y="14" width="1" height="1" fill="#222"/>
<rect x="3" y="16" width="1" height="1" fill="#222"/><rect x="5" y="16" width="1" height="1" fill="#222"/><rect x="7" y="16" width="1" height="1" fill="#222"/><rect x="9" y="16" width="1" height="1" fill="#222"/>
<rect x="12" y="13" width="5" height="1" fill="#111"/><rect x="14" y="11" width="1" height="5" fill="#111"/>
</svg>
<div class="t" style="left:68px;width:40px;top:169.93px;font-size:12.9px;text-align:center;color:#1f2a3a;letter-spacing:0px;">A</div>
<div class="t" style="left:169.5px;width:40px;top:169.93px;font-size:12.9px;text-align:center;color:#1f2a3a;letter-spacing:0px;">B</div>
<div class="t" style="left:269px;width:40px;top:169.93px;font-size:12.9px;text-align:center;color:#1f2a3a;letter-spacing:0px;">C</div>
<div class="t" style="left:352px;width:40px;top:169.93px;font-size:12.9px;text-align:center;color:#1f2a3a;letter-spacing:0px;">D</div>
<div class="t" style="left:416px;width:40px;top:169.93px;font-size:12.9px;text-align:center;color:#1f2a3a;letter-spacing:0px;">E</div>
<div class="t" style="left:480px;width:40px;top:169.93px;font-size:12.9px;text-align:center;color:#1f2a3a;letter-spacing:0px;">F</div>
<div class="t" style="left:544px;width:40px;top:169.93px;font-size:12.9px;text-align:center;color:#1f2a3a;letter-spacing:0px;">G</div>
<div class="t" style="left:608px;width:40px;top:169.93px;font-size:12.9px;text-align:center;color:#1f2a3a;letter-spacing:0px;">H</div>
<div class="t" style="left:672px;width:40px;top:169.93px;font-size:12.9px;text-align:center;color:#1f2a3a;letter-spacing:0px;">I</div>
<div class="t" style="left:736px;width:40px;top:169.93px;font-size:12.9px;text-align:center;color:#1f2a3a;letter-spacing:0px;">J</div>
<div class="t" style="left:8px;width:25px;top:210.13px;font-size:12.9px;text-align:center;color:#1f2a3a;letter-spacing:0px;">1</div>
<div class="t" style="left:8px;width:25px;top:229.73px;font-size:12.9px;text-align:center;color:#1f2a3a;letter-spacing:0px;">2</div>
<div class="t" style="left:8px;width:25px;top:249.73px;font-size:12.9px;text-align:center;color:#1f2a3a;letter-spacing:0px;">3</div>
<div class="t" style="left:8px;width:25px;top:269.73px;font-size:12.9px;text-align:center;color:#1f2a3a;letter-spacing:0px;">4</div>
<div class="t" style="left:8px;width:25px;top:289.73px;font-size:12.9px;text-align:center;color:#1f2a3a;letter-spacing:0px;">5</div>
<div class="t" style="left:8px;width:25px;top:309.73px;font-size:12.9px;text-align:center;color:#1f2a3a;letter-spacing:0px;">6</div>
<div class="t" style="left:8px;width:25px;top:329.73px;font-size:12.9px;text-align:center;color:#1f2a3a;letter-spacing:0px;">7</div>
<div class="t" style="left:8px;width:25px;top:349.73px;font-size:12.9px;text-align:center;color:#1f2a3a;letter-spacing:0px;">8</div>
<div class="t" style="left:8px;width:25px;top:369.73px;font-size:12.9px;text-align:center;color:#1f2a3a;letter-spacing:0px;">9</div>
<div class="t" style="left:8px;width:25px;top:389.73px;font-size:12.9px;text-align:center;color:#1f2a3a;letter-spacing:0px;">10</div>
<div class="t" style="left:8px;width:25px;top:409.73px;font-size:12.9px;text-align:center;color:#1f2a3a;letter-spacing:0px;">11</div>
<div class="t" style="left:8px;width:25px;top:429.73px;font-size:12.9px;text-align:center;color:#1f2a3a;letter-spacing:0px;">12</div>
<div class="t" style="left:8px;width:25px;top:449.73px;font-size:12.9px;text-align:center;color:#1f2a3a;letter-spacing:0px;">13</div>
<div class="t" style="left:8px;width:25px;top:469.73px;font-size:12.9px;text-align:center;color:#1f2a3a;letter-spacing:0px;">14</div>
<div class="t" style="left:8px;width:25px;top:489.73px;font-size:12.9px;text-align:center;color:#1f2a3a;letter-spacing:0px;">15</div>
<div class="t" style="left:8px;width:25px;top:509.73px;font-size:12.9px;text-align:center;color:#1f2a3a;letter-spacing:0px;">16</div>
<div class="t" style="left:8px;width:25px;top:529.73px;font-size:12.9px;text-align:center;color:#1f2a3a;letter-spacing:0px;">17</div>
<div class="t" style="left:8px;width:25px;top:549.73px;font-size:12.9px;text-align:center;color:#1f2a3a;letter-spacing:0px;">18</div>
<div class="t" style="left:8px;width:25px;top:569.73px;font-size:12.9px;text-align:center;color:#1f2a3a;letter-spacing:0px;">19</div>
<div class="t" style="left:8px;width:25px;top:589.73px;font-size:12.9px;text-align:center;color:#1f2a3a;letter-spacing:0px;">20</div>
<div class="t" style="left:34px;width:106.5px;top:229.73px;font-size:12.9px;text-align:right;color:#000;letter-spacing:0px;">05.06.2016</div>
<div class="t" style="left:143px;width:91.5px;top:229.73px;font-size:12.9px;text-align:right;color:#000;letter-spacing:0px;">25,6956</div>
<div class="t" style="left:237px;width:100.5px;top:229.73px;font-size:12.9px;text-align:right;color:#000;letter-spacing:0px;">25,7</div>
<div class="t" style="left:34px;width:106.5px;top:249.73px;font-size:12.9px;text-align:right;color:#000;letter-spacing:0px;">06.06.2016</div>
<div class="t" style="left:143px;width:91.5px;top:249.73px;font-size:12.9px;text-align:right;color:#000;letter-spacing:0px;">21,4569</div>
<div class="t" style="left:237px;width:100.5px;top:249.73px;font-size:12.9px;text-align:right;color:#000;letter-spacing:0px;">21,46</div>
<div class="t" style="left:34px;width:106.5px;top:269.73px;font-size:12.9px;text-align:right;color:#000;letter-spacing:0px;">07.06.2016</div>
<div class="t" style="left:143px;width:91.5px;top:269.73px;font-size:12.9px;text-align:right;color:#000;letter-spacing:0px;">27,568</div>
<div class="t" style="left:237px;width:100.5px;top:269.73px;font-size:12.9px;text-align:right;color:#000;letter-spacing:0px;">27,57</div>
<div class="t" style="left:34px;width:106.5px;top:289.73px;font-size:12.9px;text-align:right;color:#000;letter-spacing:0px;">08.06.2016</div>
<div class="t" style="left:143px;width:91.5px;top:289.73px;font-size:12.9px;text-align:right;color:#000;letter-spacing:0px;">28,5695</div>
<div class="t" style="left:237px;width:100.5px;top:289.73px;font-size:12.9px;text-align:right;color:#000;letter-spacing:0px;">28,57</div>
<div class="t" style="left:34px;width:106.5px;top:309.73px;font-size:12.9px;text-align:right;color:#000;letter-spacing:0px;">09.06.2016</div>
<div class="t" style="left:143px;width:91.5px;top:309.73px;font-size:12.9px;text-align:right;color:#000;letter-spacing:0px;">31,2582</div>
<div class="t" style="left:237px;width:100.5px;top:309.73px;font-size:12.9px;text-align:right;color:#000;letter-spacing:0px;">31,26</div>
<div class="t" style="left:34px;width:106.5px;top:329.73px;font-size:12.9px;text-align:right;color:#000;letter-spacing:0px;">10.06.2016</div>
<div class="t" style="left:143px;width:91.5px;top:329.73px;font-size:12.9px;text-align:right;color:#000;letter-spacing:0px;">30,2568</div>
<div class="t" style="left:237px;width:100.5px;top:329.73px;font-size:12.9px;text-align:right;color:#000;letter-spacing:0px;">30,26</div>
<div class="t" style="left:34px;width:106.5px;top:349.73px;font-size:12.9px;text-align:right;color:#000;letter-spacing:0px;">11.06.2016</div>
<div class="t" style="left:143px;width:91.5px;top:349.73px;font-size:12.9px;text-align:right;color:#000;letter-spacing:0px;">28,01542</div>
<div class="t" style="left:237px;width:100.5px;top:349.73px;font-size:12.9px;text-align:right;color:#000;letter-spacing:0px;">28,02</div>
<div class="t" style="left:34px;width:106.5px;top:369.73px;font-size:12.9px;text-align:right;color:#000;letter-spacing:0px;">12.06.2016</div>
<div class="t" style="left:143px;width:91.5px;top:369.73px;font-size:12.9px;text-align:right;color:#000;letter-spacing:0px;">26,0254</div>
<div class="t" style="left:237px;width:100.5px;top:369.73px;font-size:12.9px;text-align:right;color:#000;letter-spacing:0px;">26,03</div></div>
<!-- ===== vertical scrollbar ===== -->
<div class="a" style="left:802px;top:166px;width:16px;height:434px;background:#dde1e7"></div><div class="a" style="left:802px;top:166px;width:16px;height:1px;background:#857f88"></div>
<div class="a" style="left:803px;top:167px;width:14px;height:8px;box-sizing:border-box;border:1px solid #7c7478;background:#fff"></div>
<div class="a" style="left:806px;top:170px;width:8px;height:1px;background:#6a6267"></div>
<svg class="a" style="left:804px;top:180px" width="11" height="7"><path d="M1 6 L5.500 1.200 L10 6 Z" fill="#3f4856"/></svg>
<div class="a" style="left:802px;top:192px;width:15px;height:371px;box-sizing:border-box;border:1px solid #8c929c;border-radius:2px;background:linear-gradient(90deg,#f7f8fa,#eceef2 45%,#dde0e6)"></div>
<div class="a" style="left:806px;top:374px;width:8px;height:1px;background:#6e6668;box-shadow:0 2px 0 #6e6668,0 4px 0 #6e6668,0 6px 0 #6e6668"></div>
<svg class="a" style="left:804px;top:588px" width="11" height="7"><path d="M1 1.200 L5.500 6 L10 1.200 Z" fill="#3f4856"/></svg>
<!-- ===== bottom: sheet tabs + h scrollbar ===== -->
<div class="a" style="left:8px;top:600px;width:810px;height:16px;background:#dfe3e9"></div>
<div class="a" style="left:8px;top:600px;width:794px;height:1px;background:#a3a9b3"></div>
<svg class="a" style="left:8px;top:601px" width="62" height="15"><path d="M6.500 3.200 V10.800" stroke="#3c4654" stroke-width="1.400"/><path d="M12.500 3.200 L7.800 7 L12.500 10.800 Z" fill="#3c4654"/><path d="M27.500 3.200 L22.800 7 L27.500 10.800 Z" fill="#3c4654"/><path d="M36 3.200 L40.700 7 L36 10.800 Z" fill="#3c4654"/><path d="M50 3.200 L54.700 7 L50 10.800 Z" fill="#3c4654"/><path d="M56 3.200 V10.800" stroke="#3c4654" stroke-width="1.400"/></svg>
<div class="a" style="left:70px;top:601px;width:1px;height:15px;background:#a9afb9"></div>
<svg class="a" style="left:0;top:600px" width="826" height="17"><path d="M78 16 L88 1 L414 1 L414 16 Z" fill="#e6e9ee"/><path d="M466 16 L476 1 L485 1 L485 16 Z" fill="#e6e9ee"/><path d="M414.500 0 L414.500 13 Q414.500 15.500 417 15.500 L465 15.500 L476.500 0 Z" fill="#fff"/><path d="M78 15.500 L88 1" stroke="#8e959f" stroke-width="1" fill="none"/><path d="M78.5 15.500 L82.5 15.500 L82.5 11 Z" fill="#f8f9fb" stroke="#a8aeb8" stroke-width=".6"/><path d="M132 15.500 L142 1" stroke="#8e959f" stroke-width="1" fill="none"/><path d="M132.5 15.500 L136.5 15.500 L136.5 11 Z" fill="#f8f9fb" stroke="#a8aeb8" stroke-width=".6"/><path d="M185 15.500 L195 1" stroke="#8e959f" stroke-width="1" fill="none"/><path d="M185.5 15.500 L189.5 15.500 L189.5 11 Z" fill="#f8f9fb" stroke="#a8aeb8" stroke-width=".6"/><path d="M238 15.500 L248 1" stroke="#8e959f" stroke-width="1" fill="none"/><path d="M238.5 15.500 L242.5 15.500 L242.5 11 Z" fill="#f8f9fb" stroke="#a8aeb8" stroke-width=".6"/><path d="M291 15.500 L301 1" stroke="#8e959f" stroke-width="1" fill="none"/><path d="M291.5 15.500 L295.5 15.500 L295.5 11 Z" fill="#f8f9fb" stroke="#a8aeb8" stroke-width=".6"/><path d="M353 15.500 L363 1" stroke="#8e959f" stroke-width="1" fill="none"/><path d="M353.5 15.500 L357.5 15.500 L357.5 11 Z" fill="#f8f9fb" stroke="#a8aeb8" stroke-width=".6"/><path d="M414.500 1 L414.500 13 Q414.500 15.500 417 15.500 L465 15.500 L476 1" stroke="#7d8590" stroke-width="1" fill="none"/><path d="M412 15.500 L414 15.500 L414 12 Z" fill="#f8f9fb" stroke="#a8aeb8" stroke-width=".6"/></svg>
<div class="a" style="left:485px;top:601px;width:317px;height:15px;background:#dde1e7"></div>
<div class="a" style="left:485px;top:601px;width:7px;height:15px;box-sizing:border-box;border:1px solid #7a7276;background:#fff"></div>
<div class="a" style="left:488px;top:606px;width:1px;height:5px;background:#5d565b"></div>
<svg class="a" style="left:496px;top:603px" width="8" height="11"><path d="M6.800 0.800 L0.800 5.500 L6.800 10.200 Z" fill="#3c4654"/></svg>
<div class="a" style="left:509px;top:601px;width:142px;height:15px;box-sizing:border-box;border:1px solid #959ba5;border-radius:2px;background:linear-gradient(#f8f9fb,#eceef2 45%,#dde0e6)"></div>
<div class="a" style="left:576px;top:605px;width:1px;height:7px;background:#6e6668;box-shadow:2px 0 0 #6e6668,4px 0 0 #6e6668,6px 0 0 #6e6668"></div>
<svg class="a" style="left:782px;top:603px" width="8" height="11"><path d="M1.200 0.800 L7.200 5.500 L1.200 10.200 Z" fill="#3c4654"/></svg>
<div class="a" style="left:794px;top:601px;width:8px;height:15px;box-sizing:border-box;border:1px solid #7a7276;background:#fff"></div>
<div class="a" style="left:798px;top:605px;width:1px;height:7px;background:#5d565b"></div>
<!-- status bar -->
<div class="a" style="left:8px;top:615px;width:406px;height:1px;background:#c2c6cc"></div><div class="a" style="left:8px;top:616px;width:810px;height:1px;background:#8e939c"></div>
<div class="a" style="left:8px;top:617px;width:810px;height:21px;background:linear-gradient(#f3f4f6 0,#f3f4f6 1px,#dddfe4 1px,#d7dadf 8px,#cbcfd5 10px,#c9cdd3 16px,#d0d3d8 21px)"></div>
<div class="a" style="left:7px;top:638px;width:812px;height:1px;background:#66727f"></div>
<div class="a" style="left:7px;top:51px;width:1px;height:588px;background:#66727f"></div><div class="a" style="left:6px;top:51px;width:1px;height:589px;background:#eef5fd"></div><div class="a" style="left:7px;top:30px;width:1px;height:21px;background:linear-gradient(rgba(255,255,255,0),#f5f9fd)"></div>
<div class="a" style="left:818px;top:51px;width:1px;height:588px;background:#66727f"></div><div class="a" style="left:819px;top:51px;width:1px;height:589px;background:#eef5fd"></div><div class="a" style="left:818px;top:30px;width:1px;height:21px;background:linear-gradient(rgba(255,255,255,0),#f5f9fd)"></div>
<div class="a" style="left:6px;top:639px;width:814px;height:1px;background:#eef5fd"></div>
<div class="a" style="left:70px;top:619px;width:1px;height:18px;background:#8a919c;box-shadow:1px 0 0 rgba(255,255,255,.6)"></div>
<div class="a" style="left:105px;top:619px;width:1px;height:18px;background:#8a919c;box-shadow:1px 0 0 rgba(255,255,255,.6)"></div>
<div class="a" style="left:561px;top:619px;width:1px;height:18px;background:#8a919c;box-shadow:1px 0 0 rgba(255,255,255,.6)"></div>
<!-- macro icon -->
<svg class="a" style="left:79px;top:619px" width="17" height="15">
  <rect x="1.500" y="1.500" width="14" height="12" fill="#fff" stroke="#5f7ea8" stroke-width=".8"/>
  <rect x="1.500" y="1.500" width="14" height="2.800" fill="#4a90d9"/>
  <path d="M3 6.500 H6 M7.500 6.500 H10.500 M12 6.500 H14.500 M3 8.700 H6 M7.500 8.700 H10.500 M12 8.700 H14.500 M3 11 H6 M7.500 11 H10.500 M12 11 H14.500" stroke="#5ba0e4" stroke-width="1.100"/>
  <path d="M7.500 6.500 H10.500 M12 8.700 H14.500 M12 11 H14.500 M3 11 H6" stroke="#9aa0aa" stroke-width="1.100"/>
  <circle cx="4.300" cy="4.300" r="3.300" fill="#d9772a"/><circle cx="4" cy="3.600" r="1.500" fill="#f3b06a"/>
</svg>
<!-- view buttons -->
<div class="a" style="left:566px;top:618px;width:19px;height:19px;box-sizing:border-box;border:1px solid #e3a240;border-radius:3px;background:linear-gradient(#ffe27a,#ffd452 60%,#ffdf73)"></div>
<svg class="a" style="left:566px;top:618px" width="56" height="19" shape-rendering="crispEdges">
  <rect x="3" y="4" width="13" height="10" fill="#4d5566"/>
  <g fill="#fff"><rect x="4" y="5" width="3" height="2"/><rect x="8" y="5" width="3" height="2"/><rect x="12" y="5" width="3" height="2"/>
  <rect x="4" y="8" width="3" height="2"/><rect x="8" y="8" width="3" height="2"/><rect x="12" y="8" width="3" height="2"/>
  <rect x="4" y="11" width="3" height="2"/><rect x="8" y="11" width="3" height="2"/><rect x="12" y="11" width="3" height="2"/></g>
  <rect x="21.500" y="3.500" width="13" height="11" fill="#b7bac2" stroke="#4d5566"/>
  <rect x="24.500" y="5.500" width="7" height="7" fill="#fff" stroke="#4d5566"/>
  <path d="M26 8.500 H31 M26 10.500 H31" stroke="#9aa0aa"/>
  <rect x="40.500" y="3.500" width="13" height="11" fill="#b7bac2" stroke="#4d5566"/>
  <rect x="41" y="4" width="3" height="6" fill="#fff"/><rect x="45" y="4" width="3" height="6" fill="#fff"/>
  <path d="M44.500 4 V10 M48.500 4 V10.500 H41" stroke="#4d5566" fill="none"/>
</svg>
<!-- zoom slider -->
<div class="a" style="left:682px;top:626px;width:102px;height:1px;background:#8f959f;box-shadow:0 1px 0 rgba(255,255,255,.6)"></div>
<svg class="a" style="left:666px;top:618px" width="136" height="18">
  <defs><linearGradient id="zc" x1="0" y1="0" x2="0" y2="1"><stop offset="0" stop-color="#ffffff"/><stop offset="1" stop-color="#d9dce2"/></linearGradient></defs>
  <circle cx="8.800" cy="8.600" r="7.300" fill="url(#zc)" stroke="#8a8f99"/>
  <rect x="4.800" y="7.800" width="8" height="1.800" fill="#4a5260"/>
  <circle cx="125" cy="8.600" r="7.300" fill="url(#zc)" stroke="#8a8f99"/>
  <rect x="121" y="7.800" width="8" height="1.800" fill="#4a5260"/><rect x="124.100" y="4.700" width="1.800" height="8" fill="#4a5260"/>
  <path d="M63.500 2.500 H71.500 V9.500 L67.500 14 L63.500 9.500 Z" fill="#f4f5f7" stroke="#70757f"/>
</svg>
<!-- resize grip -->
<svg class="a" style="left:806px;top:625px" width="12" height="12" shape-rendering="crispEdges">
  <g fill="#9aa1ad"><rect x="8" y="1" width="2" height="2"/><rect x="5" y="4" width="2" height="2"/><rect x="8" y="4" width="2" height="2"/><rect x="2" y="7" width="2" height="2"/><rect x="5" y="7" width="2" height="2"/><rect x="8" y="7" width="2" height="2"/></g>
  <g fill="#fff" opacity=".7"><rect x="9" y="2" width="2" height="2"/><rect x="6" y="5" width="2" height="2"/><rect x="9" y="5" width="2" height="2"/><rect x="3" y="8" width="2" height="2"/><rect x="6" y="8" width="2" height="2"/><rect x="9" y="8" width="2" height="2"/></g>
</svg>

<div class="t" style="left:345.40px;top:5.84px;font-size:12px;color:#000;letter-spacing:-0.115px;text-shadow:0 0 6px #fff,0 0 6px #fff,0 0 8px #fff;">Книга7  -  Microsoft Excel</div>
<div class="t" style="left:22.20px;top:31.88px;font-size:11.6px;color:#fff;transform:scaleX(0.9258);transform-origin:0 0;">Файл</div>
<div class="t" style="left:72.10px;top:31.88px;font-size:11.6px;color:#383838;transform:scaleX(0.9447);transform-origin:0 0;">Главная</div>
<div class="t" style="left:126.10px;top:31.88px;font-size:11.6px;color:#383838;transform:scaleX(0.9421);transform-origin:0 0;">Вставка</div>
<div class="t" style="left:179.00px;top:31.88px;font-size:11.6px;color:#383838;transform:scaleX(0.9201);transform-origin:0 0;-webkit-mask-image:linear-gradient(90deg,#000 calc(100% - 5px),rgba(0,0,0,.15) 100%);">Разметка с</div>
<div class="t" style="left:244.10px;top:31.88px;font-size:11.6px;color:#383838;transform:scaleX(0.9633);transform-origin:0 0;">Формулы</div>
<div class="t" style="left:304.40px;top:31.88px;font-size:11.6px;color:#383838;letter-spacing:0.122px;">Данные</div>
<div class="t" style="left:359.10px;top:31.88px;font-size:11.6px;color:#383838;transform:scaleX(0.9461);transform-origin:0 0;-webkit-mask-image:linear-gradient(90deg,#000 calc(100% - 5px),rgba(0,0,0,.15) 100%);">Рецензирс</div>
<div class="t" style="left:425.00px;top:31.88px;font-size:11.6px;color:#383838;transform:scaleX(0.9388);transform-origin:0 0;">Вид</div>
<div class="t" style="left:457.20px;top:31.88px;font-size:11.6px;color:#383838;transform:scaleX(0.9347);transform-origin:0 0;-webkit-mask-image:linear-gradient(90deg,#000 calc(100% - 5px),rgba(0,0,0,.15) 100%);">Разработч</div>
<div class="t" style="left:522.10px;top:31.88px;font-size:11.6px;color:#383838;transform:scaleX(0.9310);transform-origin:0 0;-webkit-mask-image:linear-gradient(90deg,#000 calc(100% - 5px),rgba(0,0,0,.15) 100%);">Надстройк</div>
<div class="t" style="left:586.80px;top:31.88px;font-size:11.6px;color:#383838;transform:scaleX(0.9254);transform-origin:0 0;">Foxit PDF</div>
<div class="t" style="left:646.50px;top:31.88px;font-size:11.6px;color:#383838;transform:scaleX(0.8462);transform-origin:0 0;">ABBYY PDF</div>
<div class="t" style="left:88.40px;top:56.48px;font-size:11.6px;color:#1e1e1e;letter-spacing:-0.116px;">Автосумма</div>
<div class="t" style="left:88.40px;top:78.38px;font-size:11.6px;color:#1e1e1e;letter-spacing:-0.031px;">Недавно использовались</div>
<div class="t" style="left:88.40px;top:100.68px;font-size:11.6px;color:#1e1e1e;letter-spacing:-0.140px;">Финансовые</div>
<div class="t" style="left:258.30px;top:56.48px;font-size:11.6px;color:#1e1e1e;transform:scaleX(1.0435);transform-origin:0 0;">Логические</div>
<div class="t" style="left:258.40px;top:78.38px;font-size:11.6px;color:#1e1e1e;transform:scaleX(0.9654);transform-origin:0 0;">Текстовые</div>
<div class="t" style="left:258.40px;top:100.68px;font-size:11.6px;color:#1e1e1e;letter-spacing:0.009px;">Дата и время</div>
<div class="t" style="left:466.90px;top:56.48px;font-size:11.6px;color:#1e1e1e;letter-spacing:0.066px;">Присвоить имя</div>
<div class="t" style="left:466.90px;top:78.38px;font-size:11.6px;color:#9a9a9a;letter-spacing:-0.144px;">Использовать в формуле</div>
<div class="t" style="left:466.90px;top:100.68px;font-size:11.6px;color:#1e1e1e;letter-spacing:-0.096px;">Создать из выделенного</div>
<div class="t" style="left:14.80px;top:90.38px;font-size:11.6px;color:#1e1e1e;transform:scaleX(0.9561);transform-origin:0 0;">Вставить</div>
<div class="t" style="left:14.10px;top:103.18px;font-size:11.6px;color:#1e1e1e;letter-spacing:0.133px;">функцию</div>
<div class="t" style="left:383.60px;top:90.38px;font-size:11.6px;color:#1e1e1e;transform:scaleX(1.0367);transform-origin:0 0;">Диспетчер</div>
<div class="t" style="left:398.80px;top:102.98px;font-size:11.6px;color:#1e1e1e;transform:scaleX(1.0471);transform-origin:0 0;">имен</div>
<div class="t" style="left:621.40px;top:88.68px;font-size:11.6px;color:#1e1e1e;letter-spacing:-0.077px;">Зависимости</div>
<div class="t" style="left:631.70px;top:101.68px;font-size:11.6px;color:#1e1e1e;transform:scaleX(0.9570);transform-origin:0 0;">формул</div>
<div class="t" style="left:697.40px;top:88.68px;font-size:11.6px;color:#1e1e1e;letter-spacing:-0.025px;">Вычисление</div>
<div class="t" style="left:134.20px;top:121.28px;font-size:11.6px;color:#5d6875;letter-spacing:0.115px;">Библиотека функций</div>
<div class="t" style="left:439.60px;top:121.28px;font-size:11.6px;color:#5d6875;letter-spacing:-0.096px;">Определенные имена</div>
<div class="t" style="left:70.60px;top:144.53px;font-size:12.9px;color:#000;transform:scaleX(0.9585);transform-origin:0 0;">C2</div>
<div class="t" style="left:259.90px;top:144.53px;font-size:12.9px;color:#000;letter-spacing:0.134px;">=ОКРУГЛ(B2;2)</div>
<div class="t" style="left:72.60px;top:209.53px;font-size:12.9px;color:#000;transform:scaleX(1.0509);transform-origin:0 0;">Дата</div>
<div class="t" style="left:148.00px;top:209.53px;font-size:12.9px;color:#000;transform:scaleX(1.0758);transform-origin:0 0;">Температура</div>
<div class="t" style="left:244.60px;top:189.53px;font-size:12.9px;color:#000;transform:scaleX(1.1125);transform-origin:0 0;">Округленные</div>
<div class="t" style="left:263.00px;top:209.53px;font-size:12.9px;color:#000;transform:scaleX(1.1019);transform-origin:0 0;">данные</div>
<div class="t" style="left:15.90px;top:619.28px;font-size:11.6px;color:#2a2a2a;letter-spacing:0.158px;">Готово</div>
<div class="t" style="left:276.10px;top:619.28px;font-size:11.6px;color:#2a2a2a;transform:scaleX(0.9412);transform-origin:0 0;">Среднее: 27,35875</div>
<div class="t" style="left:388.10px;top:619.28px;font-size:11.6px;color:#2a2a2a;letter-spacing:-0.113px;">Количество: 8</div>
<div class="t" style="left:478.00px;top:619.28px;font-size:11.6px;color:#2a2a2a;transform:scaleX(0.9241);transform-origin:0 0;">Сумма: 218,87</div>
<div class="t" style="left:631.20px;top:619.28px;font-size:11.6px;color:#2a2a2a;transform:scaleX(0.9509);transform-origin:0 0;">100%</div>
<div class="t" style="left:90.80px;top:600.39px;font-size:13.3px;color:#1f2a3a;transform:scaleX(0.9367);transform-origin:0 0;">Лист7</div>
<div class="t" style="left:143.60px;top:600.39px;font-size:13.3px;color:#1f2a3a;transform:scaleX(0.9312);transform-origin:0 0;">Лист5</div>
<div class="t" style="left:196.90px;top:600.39px;font-size:13.3px;color:#1f2a3a;transform:scaleX(0.9285);transform-origin:0 0;">Лист8</div>
<div class="t" style="left:250.90px;top:600.39px;font-size:13.3px;color:#1f2a3a;transform:scaleX(0.9037);transform-origin:0 0;">Лист9</div>
<div class="t" style="left:304.80px;top:600.39px;font-size:13.3px;color:#1f2a3a;transform:scaleX(0.9087);transform-origin:0 0;">Лист10</div>
<div class="t" style="left:365.20px;top:600.39px;font-size:13.3px;color:#1f2a3a;transform:scaleX(0.9226);transform-origin:0 0;">Лист11</div>
<div class="t" style="left:423.90px;top:600.39px;font-size:13.3px;color:#1f2a3a;transform:scaleX(0.9301);transform-origin:0 0;font-weight:bold;">Лист1</div>
<div class="t" style="left:477.60px;top:600.39px;font-size:13.3px;color:#1f2a3a;transform:scaleX(0.8358);transform-origin:0 0;">Л</div>

</body></html>
